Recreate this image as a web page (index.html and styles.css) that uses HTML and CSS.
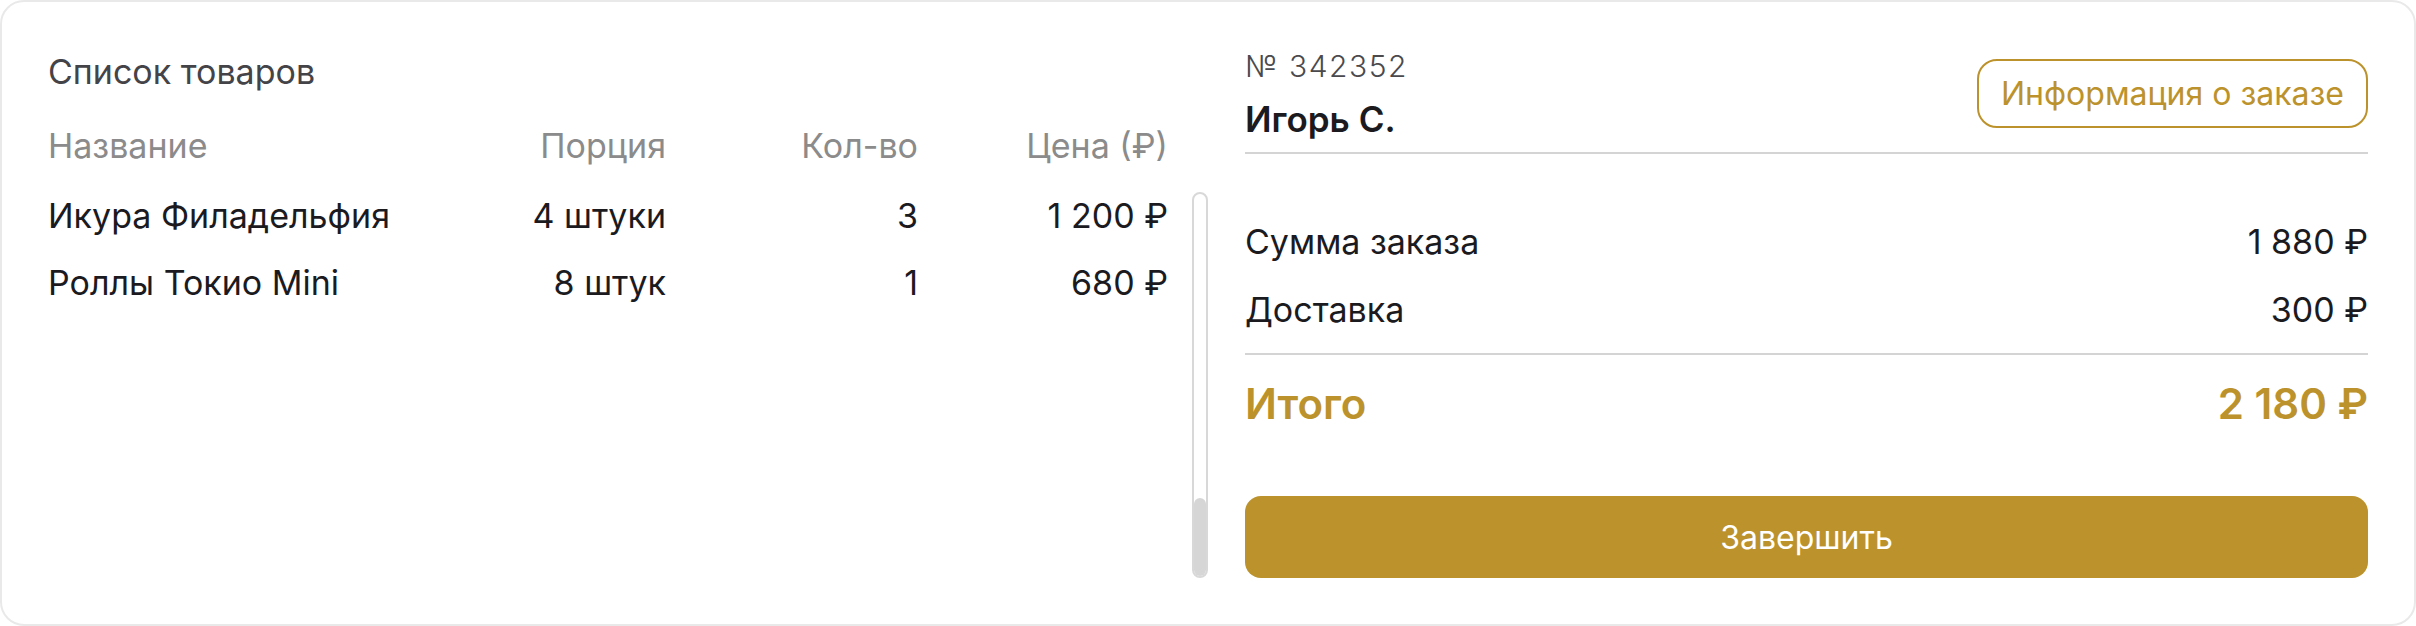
FILE: index.html
```html
<!DOCTYPE html>
<html lang="ru">
<head>
<meta charset="utf-8">
<title>Заказ</title>
<link rel="stylesheet" href="styles.css">
</head>
<body>
<div class="card">
  <section class="goods">
    <h2 class="goods-title">Список товаров</h2>
    <div class="goods-head grid">
      <span>Название</span>
      <span class="r">Порция</span>
      <span class="r">Кол-во</span>
      <span class="r">Цена (₽)</span>
    </div>
    <div class="goods-body">
      <div class="goods-list">
        <div class="grid row">
          <span>Икура Филадельфия</span>
          <span class="r">4 штуки</span>
          <span class="r">3</span>
          <span class="r">1 200 ₽</span>
        </div>
        <div class="grid row">
          <span>Роллы Токио Mini</span>
          <span class="r">8 штук</span>
          <span class="r">1</span>
          <span class="r">680 ₽</span>
        </div>
      </div>
      <div class="scrollbar"><div class="thumb"></div></div>
    </div>
  </section>
  <section class="order">
    <div class="order-head">
      <div class="who">
        <div class="num">№ 342352</div>
        <div class="name">Игорь С.</div>
      </div>
      <button class="btn-outline">Информация о заказе</button>
    </div>
    <div class="sum-rows">
      <div class="line"><span>Сумма заказа</span><span>1 880 ₽</span></div>
      <div class="line"><span>Доставка</span><span>300 ₽</span></div>
    </div>
    <div class="line total"><span>Итого</span><span>2 180 ₽</span></div>
    <button class="btn-fill">Завершить</button>
  </section>
</div>
</body>
</html>
```
FILE: styles.css
```css
* { box-sizing: border-box; }
html, body { margin: 0; padding: 0; background: #ffffff; }
body {
  font-family: Inter, "Noto Sans", "Liberation Sans", sans-serif;
  color: #1b1b1f;
}
.card {
  width: 2416px;
  height: 626px;
  border: 2px solid #e9e9e9;
  border-radius: 24px;
  padding: 46px;
  display: grid;
  grid-template-columns: 1160px 1fr;
  column-gap: 37px;
  background: #fff;
}
.goods {
  display: flex;
  flex-direction: column;
  min-height: 0;
}
.goods-title {
  margin: 0;
  font-weight: 400;
  font-size: 34px;
  line-height: 48px;
  color: #444448;
}
.grid {
  display: grid;
  grid-template-columns: 1fr 250px 252px 250px;
  font-size: 34px;
  line-height: 40px;
}
.r { text-align: right; }
.goods-head {
  margin-top: 30px;
  padding-right: 40px;
  color: #8b8b8b;
}
.goods-body {
  margin-top: 26px;
  flex: 1;
  display: flex;
  gap: 24px;
  min-height: 0;
}
.goods-list {
  flex: 1;
  padding-top: 4px;
  display: flex;
  flex-direction: column;
  gap: 27px;
}
.row { color: #1b1b1f; }
.scrollbar {
  width: 16px;
  border: 2px solid #d8d8d8;
  border-radius: 8px;
  display: flex;
  flex-direction: column;
  justify-content: flex-end;
  overflow: hidden;
}
.thumb {
  height: 78px;
  background: #d6d6d6;
  border-radius: 6px 6px 0 0;
}
.order {
  display: flex;
  flex-direction: column;
}
.order-head {
  display: flex;
  align-items: center;
  justify-content: space-between;
  padding-bottom: 13px;
  border-bottom: 2px solid #d4d4d4;
}
.who { display: flex; flex-direction: column; gap: 15px; }
.num {
  font-size: 30px;
  line-height: 36px;
  color: #4a4a4e;
  letter-spacing: 1.5px;
  font-weight: 300;
}
.name {
  font-size: 35px;
  line-height: 40px;
  font-weight: 600;
  color: #1b1b1f;
}
.btn-outline {
  font-family: inherit;
  height: 69px;
  padding: 0 22px;
  border: 2px solid #bc922c;
  border-radius: 20px;
  background: #fff;
  color: #bc922c;
  font-size: 32px;
}
.sum-rows {
  display: flex;
  flex-direction: column;
  gap: 28px;
  padding-top: 68px;
  padding-bottom: 23px;
  border-bottom: 2px solid #d4d4d4;
}
.line {
  display: flex;
  justify-content: space-between;
  font-size: 34px;
  line-height: 40px;
  color: #1b1b1f;
}
.total {
  margin-top: 25px;
  font-size: 42px;
  line-height: 48px;
  font-weight: 600;
  color: #bc922c;
}
.btn-fill {
  margin-top: auto;
  height: 82px;
  width: 100%;
  border: 0;
  border-radius: 16px;
  background: #bc922c;
  color: #fff;
  font-family: inherit;
  font-size: 32px;
}
```
